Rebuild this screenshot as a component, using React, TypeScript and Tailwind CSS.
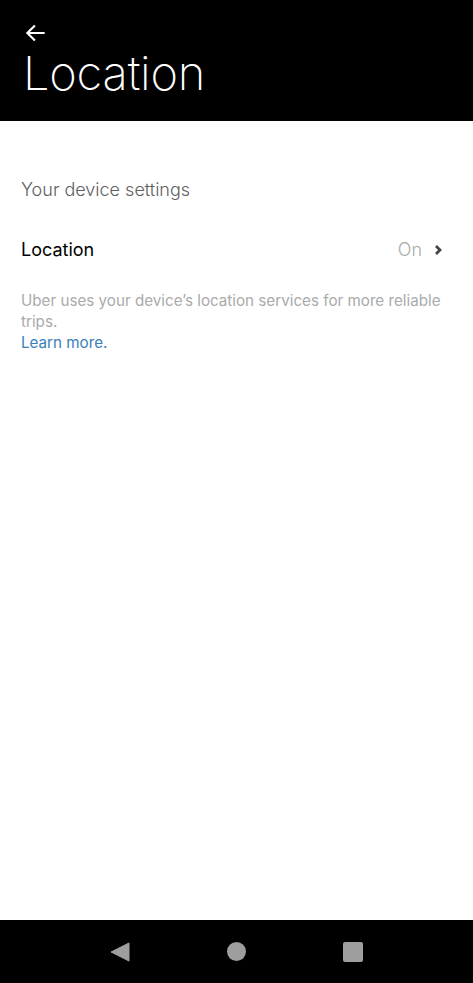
export default function App() {
  return (
    <div className="flex h-[983px] w-[473px] flex-col bg-white font-['Inter',sans-serif]">
      <header className="h-[121px] bg-black px-[22px] pt-[20px] text-white">
        <svg width="26" height="26" viewBox="0 0 24 24" fill="none" stroke="white" strokeWidth="2" className="ml-[1px]">
          <path d="M20 12H4M11 5l-7 7 7 7" />
        </svg>
        <h1 className="ml-[1px] mt-[-1px] text-[47px] font-extralight leading-[56px] tracking-[-0.2px]">Location</h1>
      </header>

      <main className="flex-1 px-[21px] pt-[57px]">
        <p className="text-[18px] font-light leading-[24px] text-[#5e5e5e]">Your device settings</p>

        <div className="mt-[36px] flex items-center justify-between">
          <span className="text-[18px] leading-[24px] text-black">Location</span>
          <div className="flex items-center gap-[11px] pr-[9px]">
            <span className="text-[18px] font-light leading-[24px] text-[#aaaaaa]">On</span>
            <svg width="10" height="12" viewBox="0 0 10 12" fill="none" stroke="#444" strokeWidth="2.8">
              <path d="M3 2l4 4-4 4" />
            </svg>
          </div>
        </div>

        <p className="mt-[28px] text-[15.2px] leading-[21px] text-[#aaaaaa]">
          Uber uses your device’s location services for more reliable trips.
        </p>
        <a className="block text-[15.2px] leading-[21px] text-[#3b80b8]">Learn more.</a>
      </main>

      <nav className="flex h-[63px] items-center justify-center gap-[97px] bg-black">
        <svg width="20" height="20" viewBox="0 0 20 20">
          <path d="M19 1L1 10l18 9z" fill="#9e9e9e" strokeLinejoin="round" stroke="#9e9e9e" strokeWidth="1" />
        </svg>
        <span className="h-[19px] w-[19px] rounded-full bg-[#9e9e9e]" />
        <span className="h-[20px] w-[20px] rounded-[2px] bg-[#9e9e9e]" />
      </nav>
    </div>
  );
}
